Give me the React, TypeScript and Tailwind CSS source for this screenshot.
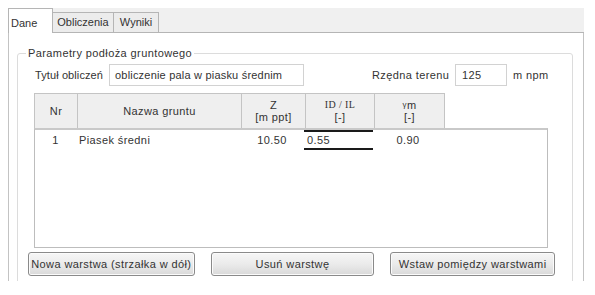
import React from "react";

const cols = [
  { w: "w-[42px]", label: ["Nr"] },
  { w: "w-[164px]", label: ["Nazwa gruntu"] },
  { w: "w-[64px]", label: ["Z", "[m ppt]"] },
  { w: "w-[69px]", label: ["ID / IL", "[-]"] },
  { w: "w-[70px]", label: ["γm", "[-]"] },
];

function Btn({ children, w }: { children: React.ReactNode; w: string }) {
  return (
    <button
      className={`${w} h-[24px] rounded-[3px] border border-[#8a8a8a] bg-gradient-to-b from-[#f6f6f6] via-[#ebebeb] to-[#d9d9d9] text-[11px] tracking-[0.4px] text-[#333] shadow-[inset_0_0_0_1px_#fbfbfb]`}
    >
      {children}
    </button>
  );
}

export default function App() {
  return (
    <div
      className="w-[595px] h-[295px] bg-white pt-[8px] pl-[8px] text-[#333] text-[11px] tracking-[0.4px]"
      style={{ fontFamily: '"Liberation Sans", Arial, sans-serif' }}
    >
      <div className="w-[576px] h-[273px] overflow-hidden flex flex-col">
        {/* tab strip */}
        <div className="h-[25px] bg-[#f0f0f0] flex items-end shrink-0 tracking-normal">
          <div className="h-[25px] w-[45px] bg-white border border-b-0 border-[#b5b5b5] pl-[2px] pt-[6px]">Dane</div>
          <div className="h-[21px] w-[61px] bg-[#ececec] border border-l-0 border-[#b5b5b5] flex items-center justify-center">Obliczenia</div>
          <div className="h-[21px] w-[45px] bg-[#ececec] border border-l-0 border-[#b5b5b5] flex items-center justify-center">Wyniki</div>
          <div className="flex-1 border-b border-[#b5b5b5]" />
        </div>

        {/* panel */}
        <div className="flex-1 border-x border-[#c3c3c3] bg-white pl-[8px] pr-[10px] pt-[20px]">
          {/* group box */}
          <div className="relative h-[260px] border border-[#dcdcdc] rounded-[3px] pl-[16px] pr-[17px] pt-[10px]">
            <span className="absolute -top-[7px] left-[8px] bg-white px-[2px] leading-[13px]">Parametry podłoża gruntowego</span>

            <div className="flex items-center h-[22px]">
              <span className="w-[75px] pl-[1px] tracking-[0.1px] whitespace-nowrap">Tytuł obliczeń</span>
              <div className="w-[195px] h-[22px] border border-[#d2d2d2] flex items-center pl-[5px] tracking-[0.2px]">obliczenie pala w piasku średnim</div>
              <span className="ml-[68px] w-[83px]">Rzędna terenu</span>
              <div className="w-[52px] h-[22px] border border-[#d2d2d2] flex items-center pl-[6px]">125</div>
              <span className="ml-[6px]">m npm</span>
            </div>

            {/* table */}
            <div className="mt-[7px] w-[514px]">
              <div className="flex">
                <div className="flex h-[35px] bg-[#efefef] border border-b-0 border-[#c4c4c4]">
                  {cols.map((c, i) => (
                    <div
                      key={i}
                      className={`${c.w} ${i > 0 ? "border-l border-[#c4c4c4]" : ""} flex flex-col items-center justify-center leading-[12px]`}
                    >
                      {c.label.map((l, j) =>
                        l === "γm" ? (
                          <span key={j}>
                            <span className="text-[8px] align-top">γ</span>m
                          </span>
                        ) : l === "ID / IL" ? (
                          <span key={j} style={{ fontFamily: '"Liberation Serif", serif' }} className="text-[10px]">ID / IL</span>
                        ) : (
                          <span key={j}>{l}</span>
                        )
                      )}
                    </div>
                  ))}
                </div>
              </div>
              <div className="h-[120px] border border-[#bdbdbd] border-t-[2px] border-t-[#c9c9c9]">
                <div className="flex h-[20px] items-center">
                  <div className="w-[41px] text-center">1</div>
                  <div className="w-[164px] pl-[3px]">Piasek średni</div>
                  <div className="w-[64px] text-center">10.50</div>
                  <div className="w-[69px] h-[20px] border-y-[2px] border-[#1a1a1a] flex items-center pl-[3px]">0.55</div>
                  <div className="w-[70px] text-center">0.90</div>
                </div>
              </div>
            </div>

            {/* buttons */}
            <div className="flex mt-[4px] -ml-[6px] gap-[16px]">
              <Btn w="w-[167px]">Nowa warstwa (strzałka w dół)</Btn>
              <Btn w="w-[164px]">Usuń warstwę</Btn>
              <Btn w="w-[165px]">Wstaw pomiędzy warstwami</Btn>
            </div>
          </div>
        </div>
      </div>
    </div>
  );
}
